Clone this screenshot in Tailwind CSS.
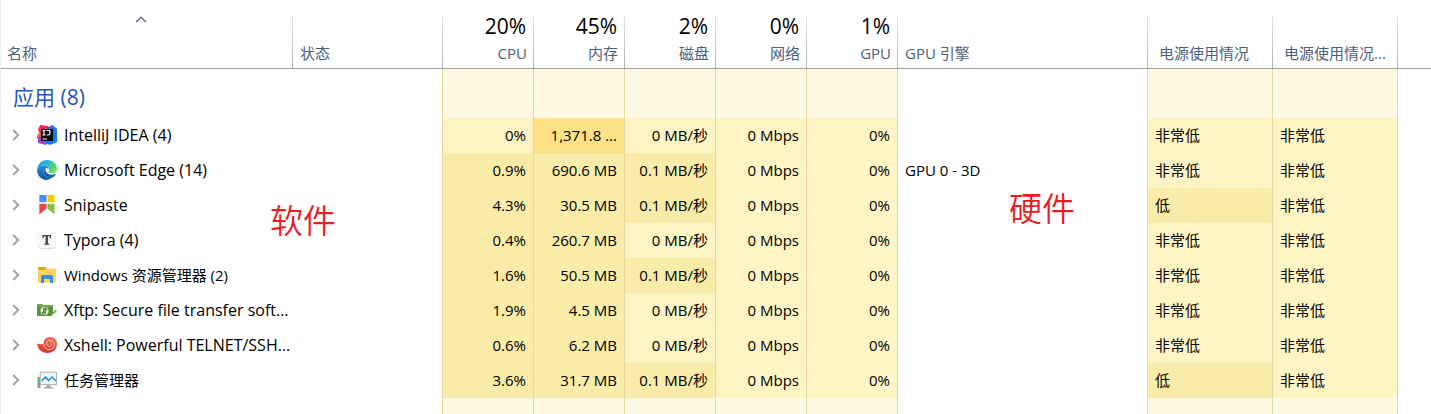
<!DOCTYPE html>
<html lang="zh-CN">
<head>
<meta charset="utf-8">
<meta name="viewport" content="width=device-width, initial-scale=1">
<title>任务管理器</title>
<script src="https://cdn.jsdelivr.net/npm/@tailwindcss/browser@4"></script>
</head>
<body class="bg-white font-['Open_Sans','Noto_Sans_CJK_SC',sans-serif] text-[15px] leading-5 text-black">
<svg class="hidden" aria-hidden="true">
  <symbol id="chev" viewBox="0 0 8 12"><path d="M1.200 1 6.200 6l-5 5" fill="none" stroke="#a3a3a3" stroke-width="2"/></symbol>
</svg>
<main class="relative min-h-screen overflow-hidden border-l border-[#ededed] pt-[15px]">
<table class="-ml-px w-[calc(100%+1px)] table-fixed border-separate border-spacing-0 whitespace-nowrap">
  <colgroup>
    <col class="w-[293px]"><col class="w-[150px]"><col class="w-[91px]"><col class="w-[91px]"><col class="w-[91px]"><col class="w-[91px]"><col class="w-[91px]"><col class="w-[250px]"><col class="w-[125px]"><col class="w-[125px]"><col>
  </colgroup>
  <thead class="text-left text-[#4c607a] [&_th]:h-[54px] [&_th]:border-b [&_th]:border-[#a0a0a0] [&_th]:bg-[linear-gradient(#e8e8e8,#b0b0b0)] [&_th]:bg-[length:1px_100%] [&_th]:bg-right [&_th]:bg-no-repeat [&_th]:px-[7px] [&_th]:pb-[5px] [&_th]:align-bottom [&_th]:font-normal [&_th:last-child]:bg-none [&_button]:w-full [&_button]:text-left [&_button.num]:text-right [&_button]:block">
    <tr>
      <th scope="col" aria-sort="ascending"><button type="button"><svg class="mr-auto mb-5 ml-32 h-[7px] w-3" viewBox="0 0 12 7" fill="none" stroke="#62698c" stroke-width="1.500"><path d="M1 6 6 1.300 11 6"/></svg>名称</button></th>
      <th scope="col"><button type="button">状态</button></th>
      <th scope="col"><button type="button" class="num"><span class="mb-1.5 block pr-px text-[21px] leading-[22px] text-black">20%</span>CPU</button></th>
      <th scope="col"><button type="button" class="num"><span class="mb-1.5 block pr-px text-[21px] leading-[22px] text-black">45%</span>内存</button></th>
      <th scope="col"><button type="button" class="num"><span class="mb-1.5 block pr-px text-[21px] leading-[22px] text-black">2%</span>磁盘</button></th>
      <th scope="col"><button type="button" class="num"><span class="mb-1.5 block pr-px text-[21px] leading-[22px] text-black">0%</span>网络</button></th>
      <th scope="col"><button type="button" class="num"><span class="mb-1.5 block pr-px text-[21px] leading-[22px] text-black">1%</span>GPU</button></th>
      <th scope="col"><button type="button">GPU 引擎</button></th>
      <th scope="col"><button type="button" class="pl-1">电源使用情况</button></th>
      <th scope="col"><button type="button" class="pl-1">电源使用情况...</button></th>
      <th></th>
    </tr>
  </thead>
  <tbody class="[&_td]:border-r [&_td]:border-[#e8d5a0] [&_td:last-child]:border-0 [&_td]:bg-[#fff8e3] [&_td:nth-child(2)]:bg-white [&_td:nth-child(8)]:bg-white [&_td:last-child]:bg-white">
    <tr>
      <th scope="rowgroup" class="h-[49px] pt-1.5 pl-[13px] text-left text-[21px] font-normal text-[#1f55be]">应用 (8)</th>
      <td></td><td></td><td></td><td></td><td></td><td></td><td></td><td></td><td></td><td></td>
    </tr>
  </tbody>
  <tbody class="[&_td]:h-[35px] [&_td]:border-r [&_td]:border-[#e8d5a0] [&_td]:bg-[#fff4c4] [&_td]:px-[7px] [&_td]:pb-[2px] [&_th]:pb-[2px] [&_td]:text-right [&_td:nth-child(n+8)]:text-left [&_td:last-child]:border-0 [&_td:nth-child(2)]:bg-white [&_td:nth-child(8)]:bg-white [&_td:last-child]:bg-white [&_td.med]:bg-[#f9eca8] [&_td.high]:bg-[#ffe285] [&_th]:pr-1 [&_th]:pl-3 [&_th]:text-left [&_th]:font-normal [&_th>div]:flex [&_th>div]:items-center [&_button]:mr-[17px] [&_button_svg]:h-3 [&_button_svg]:w-2 [&_div>svg]:mr-[7px] [&_div>svg]:size-5 [&_div>svg]:shrink-0">
    <tr>
      <th scope="row"><div class="text-base leading-5"><button type="button" aria-label="展开 IntelliJ IDEA"><svg><use href="#chev"/></svg></button>
        <svg viewBox="0 0 20 20"><path d="M1 5 4 3v9l-4 2v-4l2-2z" fill="#f47b32"/><path d="M3 0 11 1l4 4-9 7-5 2 3-6-3-3z" fill="#ee2857"/><path d="M1 13 5 10l8 7-4 3-8-2z" fill="#a642c6"/><path d="m11 3 4-3 5 4v13l-7 3-6-3z" fill="#087cfa"/><path d="m11 3 4-3 5 4-3 5z" fill="#4067e8"/><path d="M4 4h12v12H4z" fill="#080808"/><path d="M5.500 5.500h3M7 5.500V10M5.500 10h3M9.800 5.500h3v3q0 1.500-1.500 1.500H9.800M5.500 14h4.500" fill="none" stroke="#fff" stroke-width="1.200"/></svg>IntelliJ IDEA (4)</div></th>
      <td></td><td>0%</td><td class="high">1,371.8 ...</td><td>0 MB/秒</td><td>0 Mbps</td><td>0%</td><td></td><td>非常低</td><td>非常低</td><td></td>
    </tr>
    <tr>
      <th scope="row"><div class="text-base leading-5"><button type="button" aria-label="展开 Microsoft Edge"><svg><use href="#chev"/></svg></button>
        <svg viewBox="0 0 20 20"><defs><linearGradient id="eg" x1="0" y1="0" x2="1" y2=".5"><stop stop-color="#2296e8"/><stop offset=".5" stop-color="#28b9d5"/><stop offset="1" stop-color="#6bdd52"/></linearGradient><linearGradient id="eb" x1="0" y1="0" x2="0" y2="1"><stop stop-color="#1d91dc"/><stop offset="1" stop-color="#124e9b"/></linearGradient></defs><path d="M0 9.500C.8 3.600 5 0 10 0c6 0 10 4 10 8.600 0 3.200-2.400 5-5.200 5-2.300 0-3.600-.9-3.600-1.600 0-.6.9-.9.900-2.300C12.100 7.600 9.800 5.600 6.700 5.600 3.400 5.600 1.100 7.300 0 9.500z" fill="url(#eg)"/><path d="M0 10c.6-2.800 3.200-4.600 6.300-4.600 3 0 5.200 1.600 5.700 3.600-1-.8-2.100-.9-3-.7-1.900.5-2.600 2.200-2.300 4.200.5 3.400 3.500 5.700 7.300 5.600-1.200 1.200-2.600 1.800-4.200 1.800C4.200 20 0 15.500 0 10z" fill="url(#eb)"/><path d="M9 8.300C7 9 6.200 10.900 6.700 13c.8 3.300 3.700 5.300 7 5.200 2.200-.5 4-2 5-3.700.2-.5-.1-.7-.5-.5-3.300 1.500-7.500.6-9-1.900-.9-1.400-.8-2.800-.2-3.800z" fill="#1762b1"/></svg>Microsoft Edge (14)</div></th>
      <td></td><td class="med">0.9%</td><td class="med">690.6 MB</td><td class="med">0.1 MB/秒</td><td>0 Mbps</td><td>0%</td><td>GPU 0 - 3D</td><td>非常低</td><td>非常低</td><td></td>
    </tr>
    <tr>
      <th scope="row"><div class="text-base leading-5"><button type="button" aria-label="展开 Snipaste"><svg><use href="#chev"/></svg></button>
        <svg viewBox="0 0 20 20"><path d="M2.300 0h7.200v7.200H2.300z" fill="#4b8df8"/><path d="M10.500 0h7v7.200h-7z" fill="#fbc500"/><path d="M2.300 8.800h7.200v4.700l-7.200 6z" fill="#e84848"/><path d="M10.500 8.800h7v10.700l-7-6z" fill="#82c440"/></svg>Snipaste</div></th>
      <td></td><td class="med">4.3%</td><td class="med">30.5 MB</td><td class="med">0.1 MB/秒</td><td>0 Mbps</td><td>0%</td><td></td><td class="med">低</td><td>非常低</td><td></td>
    </tr>
    <tr>
      <th scope="row"><div class="text-base leading-5"><button type="button" aria-label="展开 Typora"><svg><use href="#chev"/></svg></button>
        <svg viewBox="0 0 20 20"><rect x=".7" y="1" width="18" height="18" rx="4" fill="#dcdcdc"/><rect x="1" y="1" width="17.400" height="17" rx="3.700" fill="#fafafa"/><path d="M5.500 5h8.500v3.200h-1l-.5-2h-1.600v7.300l1.500.3v.9H7.200v-.9l1.400-.3V6.200H7l-.5 2h-1z" fill="#424242"/></svg>Typora (4)</div></th>
      <td></td><td class="med">0.4%</td><td class="med">260.7 MB</td><td>0 MB/秒</td><td>0 Mbps</td><td>0%</td><td></td><td>非常低</td><td>非常低</td><td></td>
    </tr>
    <tr>
      <th scope="row"><div><button type="button" aria-label="展开 Windows 资源管理器"><svg><use href="#chev"/></svg></button>
        <svg viewBox="0 0 20 20"><path d="M1 3q0-1 1-1h6l2 2v3H1z" fill="#e3a016"/><path d="M1 5h7l2-1.500h8q1 0 1 1V17q0 .6-.6.6H1.600Q1 17.600 1 17z" fill="#ffd261"/><path d="M4 18v-6q0-2 2-2h8q2 0 2 2v6h-3v-4H7v4z" fill="#378bdc"/></svg>Windows 资源管理器 (2)</div></th>
      <td></td><td class="med">1.6%</td><td class="med">50.5 MB</td><td class="med">0.1 MB/秒</td><td>0 Mbps</td><td>0%</td><td></td><td>非常低</td><td>非常低</td><td></td>
    </tr>
    <tr>
      <th scope="row"><div class="text-base leading-5"><button type="button" aria-label="展开 Xftp"><svg><use href="#chev"/></svg></button>
        <svg viewBox="0 0 20 20"><path d="M0 4h5l1 1h10v11H0z" fill="#74a84c"/><path d="M0 7h16v9H0z" fill="#589335"/><circle cx="7.500" cy="11" r="4" fill="#e9f3e1"/><path d="M6.700 8v6L4.700 12M8.300 14V8l2 2" fill="none" stroke="#4d872f" stroke-width="1.300"/><path d="m15 15 1-3 2.500-2.500 1.500 1.500-3 3z" fill="#79b64b"/><path d="m14.500 16 .7-2 1.500 1.300z" fill="#fff"/></svg>Xftp: Secure file transfer soft...</div></th>
      <td></td><td class="med">1.9%</td><td class="med">4.5 MB</td><td>0 MB/秒</td><td>0 Mbps</td><td>0%</td><td></td><td>非常低</td><td>非常低</td><td></td>
    </tr>
    <tr>
      <th scope="row"><div class="text-base leading-5"><button type="button" aria-label="展开 Xshell"><svg><use href="#chev"/></svg></button>
        <svg viewBox="0 0 20 20"><defs><linearGradient id="xs" x1="0" y1="0" x2="0" y2="1"><stop stop-color="#f4704f"/><stop offset="1" stop-color="#d7332b"/></linearGradient></defs><path d="M0 8.500q3.500 1.300 6.700.3C6.300 4.500 9.500 2 13 2c3.800 0 7 2.800 7 7 0 5-4 9-9.500 9C5 18 .8 14.500 0 8.500z" fill="url(#xs)"/><path d="M6.700 9c0 3.500 2.400 5.600 5.400 5.600 3.100 0 5.400-2.300 5.400-5 0-2.600-1.900-4.400-4.100-4.400-2.100 0-3.700 1.500-3.700 3.400 0 1.700 1.200 2.900 2.700 2.900 1.400 0 2.300-1 2.300-2.100 0-1-.8-1.700-1.700-1.700" fill="none" stroke="#ffd5c8" stroke-width=".9"/></svg>Xshell: Powerful TELNET/SSH...</div></th>
      <td></td><td class="med">0.6%</td><td class="med">6.2 MB</td><td>0 MB/秒</td><td>0 Mbps</td><td>0%</td><td></td><td>非常低</td><td>非常低</td><td></td>
    </tr>
    <tr>
      <th scope="row"><div><button type="button" aria-label="展开 任务管理器"><svg><use href="#chev"/></svg></button>
        <svg viewBox="0 0 20 20"><path d="M.5 7h3v11h-3z" fill="#8e9699"/><path d="M1 8h2v3H1z" fill="#3fd33a"/><path d="M3.200 2.200h16.300v12.500H3.200z" fill="#e9f6fd" stroke="#a9afb2"/><path d="m4.500 11 4-4 3 3.500L15 7l4 4" fill="none" stroke="#2b8cba" stroke-width="1.300"/><path d="M9.500 15h4v2H16v1.500H7V17h2.500z" fill="#a1a8ab"/></svg>任务管理器</div></th>
      <td></td><td class="med">3.6%</td><td class="med">31.7 MB</td><td class="med">0.1 MB/秒</td><td>0 Mbps</td><td>0%</td><td></td><td class="med">低</td><td>非常低</td><td></td>
    </tr>
  </tbody>
  <tbody class="[&_td]:h-4 [&_td]:border-r [&_td]:border-[#e8d5a0] [&_td:last-child]:border-0 [&_td]:bg-[#fff8e3] [&_td:nth-child(2)]:bg-white [&_td:nth-child(8)]:bg-white [&_td:last-child]:bg-white">
    <tr><th></th><td></td><td></td><td></td><td></td><td></td><td></td><td></td><td></td><td></td><td></td></tr>
  </tbody>
</table>
<span class="absolute top-[199px] left-[269px] font-['Noto_Sans_CJK_SC'] text-[33px] leading-10 font-[350] text-[#ed1c24]">软件</span>
<span class="absolute top-[187px] left-[1008px] font-['Noto_Sans_CJK_SC'] text-[33px] leading-10 font-[350] text-[#ed1c24]">硬件</span>
</main>
</body>
</html>
